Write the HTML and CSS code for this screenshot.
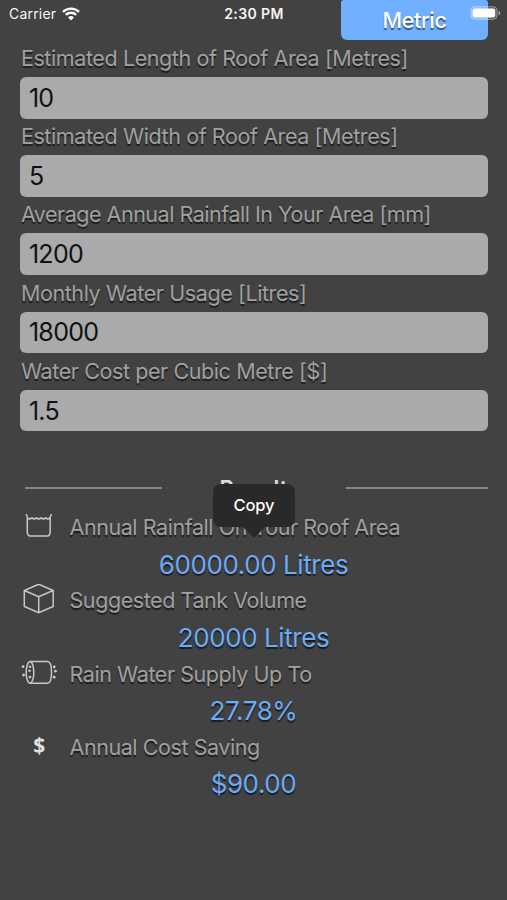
FILE: index.html
```html
<!DOCTYPE html>
<html lang="en">
<head>
<meta charset="utf-8">
<title>Rain Water Calculator</title>
<link rel="stylesheet" href="styles.css">
</head>
<body>
<header class="status">
  <div class="carrier"><span>Carrier</span>
    <svg class="wifi" viewBox="0 0 18 14"><path d="M9 13.4 6.1 10.4a4.1 4.1 0 0 1 5.8 0Z" fill="#fff"/><path d="M3.8 7.9a7.4 7.4 0 0 1 10.4 0M1 4.9a11.4 11.4 0 0 1 16 0" fill="none" stroke="#fff" stroke-width="2.3"/></svg>
  </div>
  <time class="clock">2:30 PM</time>
  <button class="unit">Metric</button>
  <svg class="battery" viewBox="0 0 32 14"><rect x="1" y=".7" width="26" height="12.6" rx="3.6" fill="#fff" fill-opacity=".12" stroke="#fff" stroke-opacity=".4"/><rect x="2.6" y="2.4" width="22.6" height="9.2" rx="2" fill="#fff"/><path d="M28.6 4.8q3.4 2.2 0 4.6Z" fill="#aaa"/></svg>
</header>
<main>
  <form class="form">
    <label class="row"><span>Estimated Length of Roof Area [Metres]</span><input value="10"></label>
    <label class="row"><span>Estimated Width of Roof Area [Metres]</span><input value="5"></label>
    <label class="row"><span class="tight">Average Annual Rainfall In Your Area [mm]</span><input value="1200"></label>
    <label class="row"><span>Monthly Water Usage [Litres]</span><input value="18000"></label>
    <label class="row"><span>Water Cost per Cubic Metre [$]</span><input value="1.5"></label>
  </form>
  <div class="divider"><i class="rule left"></i><h2>Result</h2><i class="rule right"></i></div>
  <section class="results">
    <div class="tip">Copy</div>
    <div class="item">
      <div class="name"><svg class="icon" viewBox="0 0 36 32"><path d="M5 3.2 6.3 5.9V20.9q0 4.2 4.2 4.2H25q4.2 0 4.2-4.2V5.9L30.5 3.2M6.3 6.9q2.3 2 4.6 0 2.3 2 4.6 0 2.3 2 4.6 0 2.3 2 4.6 0 2.3 2 4.5 0"/></svg><span>Annual Rainfall On Your Roof Area</span></div>
      <div class="value">60000.00 Litres</div>
    </div>
    <div class="item">
      <div class="name"><svg class="icon" viewBox="0 0 36 32"><path d="M17.7 .2 32.2 6.5V22.5L17.7 28.8 3.3 22.5V6.5ZM3.3 6.5 17.7 12.8 32.2 6.5M17.7 12.8V28.8"/></svg><span>Suggested Tank Volume</span></div>
      <div class="value">20000 Litres</div>
    </div>
    <div class="item">
      <div class="name"><svg class="icon" viewBox="0 0 36 32"><ellipse cx="9" cy="14.4" rx="3.8" ry="10.8"/><path d="M9 3.6H26.7C31.8 4.2 31.8 24.6 26.7 25.2H9"/><g class="dots"><circle cx="2" cy="8.7" r="1.4"/><circle cx="2.6" cy="17" r="1.4"/><circle cx="9" cy="8.7" r="1.3"/><circle cx="8.6" cy="12.7" r="1.3"/><circle cx="9" cy="19.1" r="1.3"/><circle cx="33.2" cy="8.9" r="1.4"/><circle cx="34.4" cy="13.2" r="1.4"/><circle cx="33.2" cy="19.2" r="1.4"/></g></svg><span>Rain Water Supply Up To</span></div>
      <div class="value">27.78%</div>
    </div>
    <div class="item">
      <div class="name"><span class="icon dollar">$</span><span>Annual Cost Saving</span></div>
      <div class="value">$90.00</div>
    </div>
  </section>
</main>
</body>
</html>
```
FILE: styles.css
```css
* { box-sizing: border-box; }
body { margin: 0; height: 900px; overflow: hidden; background: #424242; color: #a0a0a0; font-family: Inter, "Liberation Sans", sans-serif; }
.status { position: relative; height: 40px; display: grid; grid-template-columns: 194px 120px 27px 147px; align-items: start; color: #f5f5f5; }
.carrier { display: flex; align-items: center; gap: 6px; height: 27px; padding-left: 9px; font-size: 14px; letter-spacing: .2px; }
.wifi { width: 18px; height: 14px; }
.clock { line-height: 27px; font-size: 14px; font-weight: 600; text-align: center; letter-spacing: .4px; }
.unit { grid-column: 4; height: 40px; padding: 0; border: 0; border-radius: 3px 3px 6px 6px; background: #70b0ff; color: #fff; font: 500 21.5px/40px Inter, sans-serif; letter-spacing: -.3px; text-shadow: 0 1.5px 1px #0008; }
.battery { position: absolute; left: 470px; top: 6px; width: 32px; height: 14px; }
.form { padding: 0 19.5px 0 20.4px; }
.row { display: block; height: 78.2px; font-size: 21.5px; letter-spacing: -.4px; text-shadow: 0 1.5px 1px #0009; }
.row span { display: block; width: max-content; height: 37px; line-height: 37px; padding-left: .5px; white-space: nowrap; }
.row .tight { letter-spacing: -.48px; }
.row input { display: block; width: 100%; height: 41.5px; padding: 0 8.5px; border: 0; border-radius: 6px; background: #aaa; color: #111; font: 400 25px Inter, sans-serif; letter-spacing: -.7px; }
.divider { display: flex; align-items: center; height: 40px; margin: 37.5px 19.5px 0 25px; }
.rule { width: 137px; height: 2px; background: #858585; }
.rule.right { width: 142px; }
.divider h2 { flex: 1; margin: 0; text-align: center; font-size: 22px; font-weight: 600; letter-spacing: .3px; color: #ddd; }
.results { position: relative; padding-top: .1px; }
.item { height: 73.3px; }
.name { display: flex; align-items: center; height: 37px; padding-left: 21px; font-size: 21.5px; letter-spacing: -.43px; text-shadow: 0 1.5px 1px #0009; white-space: nowrap; }
.icon { width: 36px; height: 32px; margin-right: 12.5px; fill: none; stroke: #c8c8c8; stroke-width: 1.5; flex: none; }
.dots { fill: #c8c8c8; stroke: none; }
.dollar { text-align: center; font: 700 21px/29px "Open Sans", sans-serif; color: #e0e0e0; text-shadow: none; }
.value { height: 36.3px; line-height: 38px; text-align: center; font-size: 26px; letter-spacing: -.42px; color: #6cabf5; text-shadow: 0 1.5px 1px #0009; }
.tip { position: absolute; left: 213px; top: -24px; width: 82px; height: 43px; border-radius: 8px; background: #292929; color: #fff; font: 500 16.5px/43px Inter, sans-serif; letter-spacing: -.15px; text-align: center; z-index: 1; }
.tip::after { content: ""; position: absolute; left: 29px; top: 42px; border: solid transparent; border-width: 12px 12px 0; border-top-color: #292929; }
```
